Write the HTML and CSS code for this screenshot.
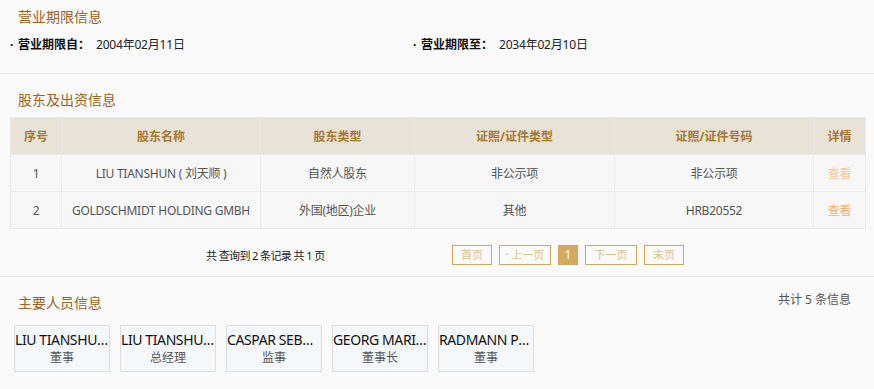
FILE: index.html
```html
<!DOCTYPE html>
<html lang="zh">
<head>
<meta charset="utf-8">
<link rel="stylesheet" href="styles.css">
</head>
<body>
<section class="sec sec-term">
  <h2 class="title">营业期限信息</h2>
  <div class="term-grid">
    <div class="term"><span class="dot">·</span><span class="label">营业期限自：</span><span class="value">2004年02月11日</span></div>
    <div class="term"><span class="dot">·</span><span class="label">营业期限至：</span><span class="value">2034年02月10日</span></div>
  </div>
</section>

<section class="sec sec-holder">
  <h2 class="title">股东及出资信息</h2>
  <table class="tbl">
    <colgroup>
      <col style="width:51px"><col style="width:199px"><col style="width:154px"><col style="width:200px"><col style="width:199px"><col style="width:52px">
    </colgroup>
    <thead>
      <tr><th>序号</th><th>股东名称</th><th>股东类型</th><th>证照/证件类型</th><th>证照/证件号码</th><th>详情</th></tr>
    </thead>
    <tbody>
      <tr><td>1</td><td>LIU TIANSHUN ( 刘天顺 )</td><td>自然人股东</td><td>非公示项</td><td>非公示项</td><td><span class="link dim">查看</span></td></tr>
      <tr><td>2</td><td>GOLDSCHMIDT HOLDING GMBH</td><td>外国(地区)企业</td><td>其他</td><td>HRB20552</td><td><span class="link">查看</span></td></tr>
    </tbody>
  </table>
  <div class="pager">
    <span class="pager-info">共 查询到 2 条记录 共 1 页</span>
    <div class="pager-btns">
      <span class="pbtn w40">首页</span>
      <span class="pbtn w52"><span class="arr">•</span>上一页</span>
      <span class="pbtn cur">1</span>
      <span class="pbtn w52">下一页</span>
      <span class="pbtn w40">末页</span>
    </div>
  </div>
</section>

<section class="sec sec-staff">
  <div class="staff-head">
    <h2 class="title">主要人员信息</h2>
    <span class="count">共计 5 条信息</span>
  </div>
  <div class="cards">
    <div class="card"><div class="name" title="LIU TIANSHUN（刘天顺）">LIU TIANSHUN（刘天顺）</div><div class="role">董事</div></div>
    <div class="card"><div class="name" title="LIU TIANSHUN（刘天顺）">LIU TIANSHUN（刘天顺）</div><div class="role">总经理</div></div>
    <div class="card"><div class="name" title="CASPAR SEBASTIAN">CASPAR SEBASTIAN</div><div class="role">监事</div></div>
    <div class="card"><div class="name" title="GEORG MARIA THEODOR">GEORG MARIA THEODOR</div><div class="role">董事长</div></div>
    <div class="card"><div class="name" title="RADMANN PETER">RADMANN PETER</div><div class="role">董事</div></div>
  </div>
</section>
</body>
</html>
```

FILE: styles.css
```css
* { box-sizing: border-box; }
html, body { margin: 0; padding: 0; }
body {
  background: #fafafa;
  font-family: "Noto Sans", "Noto Sans CJK SC", sans-serif;
  font-size: 12px;
  color: #333;
  width: 874px;
  height: 389px;
  overflow: hidden;
}
.title {
  margin: 0 0 0 18px;
  font-size: 14px;
  line-height: 20px;
  font-weight: normal;
  color: #a0621c;
}
.sec { border-bottom: 1px solid #e9e9e9; }
.sec-term { height: 74px; padding-top: 7px; }
.term-grid {
  display: grid;
  grid-template-columns: 403px 403px;
  margin: 8px 0 0 10px;
}
.term { display: flex; line-height: 20px; color: #111; }
.dot { width: 8px; font-weight: bold; }
.label { width: 78px; font-weight: bold; }
.value { color: #222; letter-spacing: -0.2px; }

.sec-holder { height: 203px; padding-top: 16px; }
.tbl {
  margin: 7px 0 0 10px;
  border-collapse: collapse;
  table-layout: fixed;
  width: 855px;
}
.tbl th, .tbl td {
  border: 1px solid #e9e9e9;
  height: 37px;
  text-align: center;
  padding: 0;
  font-size: 12px;
}
.tbl th { background: #e8e2d7; color: #a5782e; font-weight: bold; }
.tbl td { background: #f7f7f7; color: #555; letter-spacing: -0.25px; }
.link { color: #f8b06a; }
.link.dim { color: #f9c496; }

.pager { display: flex; align-items: center; margin-top: 16px; height: 20px; }
.pager-info { margin-left: 206px; width: 246px; color: #222; font-size: 11px; letter-spacing: -0.6px; }
.pager-btns { display: flex; gap: 7px; }
.pbtn {
  height: 20px;
  border: 1px solid #d4a85c;
  color: #dcc08e;
  display: flex;
  align-items: center;
  justify-content: center;
  line-height: 18px;
  font-size: 11px;
}
.w40 { width: 40px; }
.w52 { width: 52px; }
.arr { font-size: 7px; margin-right: 3px; }
.pbtn.cur { width: 20px; background: #d4aa5e; color: #fff; font-size: 12px; }

.sec-staff { border-bottom: none; padding-top: 16px; }
.staff-head { display: flex; justify-content: space-between; align-items: flex-start; }
.count { margin-right: 23px; margin-top: -3px; line-height: 20px; color: #555; }
.cards { display: flex; gap: 10px; margin: 12px 0 0 14px; }
.card {
  width: 96px;
  height: 47px;
  background: #f5f8fa;
  border: 1px solid #dcdcdc;
  text-align: center;
  padding-top: 5px;
}
.name {
  font-size: 14px;
  line-height: 18px;
  color: #111;
  white-space: nowrap;
  overflow: hidden;
  text-overflow: ellipsis;
  letter-spacing: -0.4px;
}
.role { font-size: 12px; line-height: 18px; color: #555; }
```
